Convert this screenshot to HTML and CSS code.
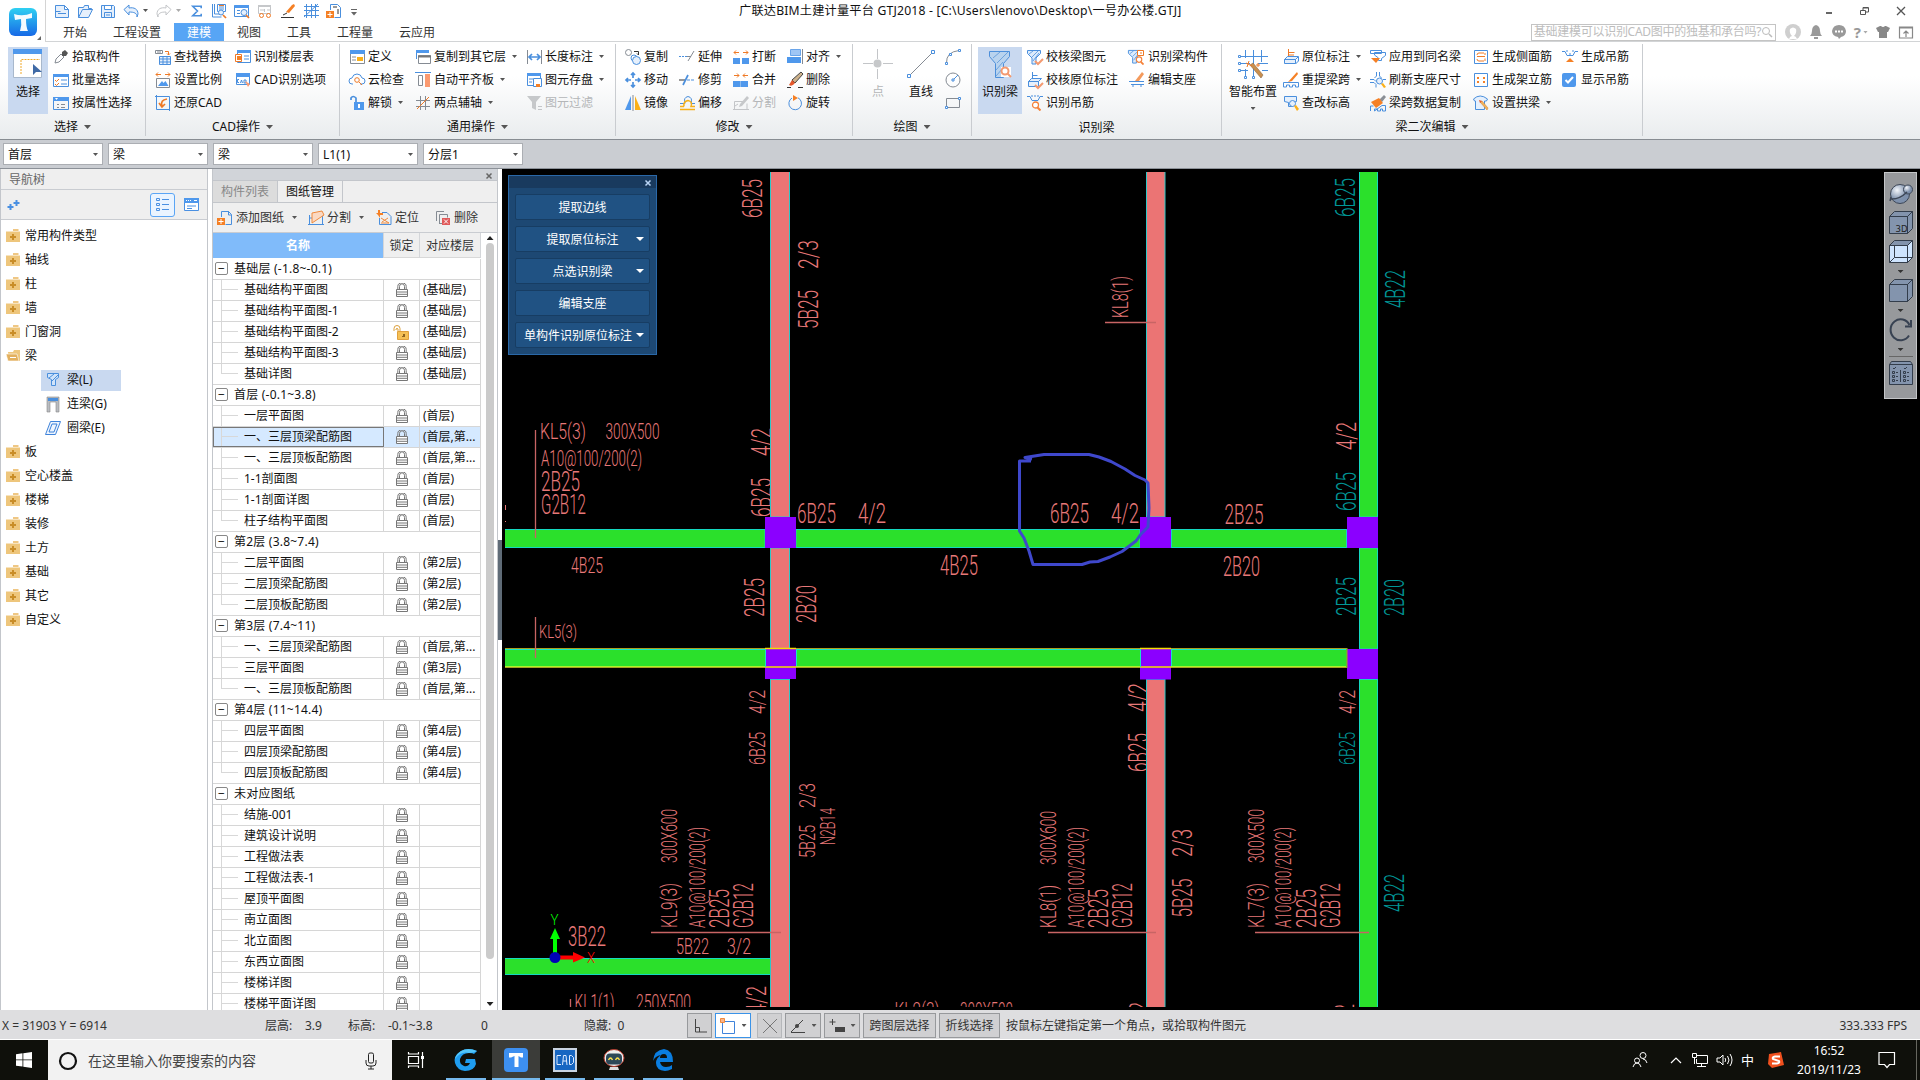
FILE: index.html
```html
<!DOCTYPE html>
<html lang="zh-CN">
<head>
<meta charset="utf-8">
<title>广联达BIM土建计量平台 GTJ2018</title>
<link rel="stylesheet" href="styles.css">
</head>
<body>
<svg class="defs" width="0" height="0">
  <symbol id="lock" viewBox="0 0 12 14"><path d="M3.500 6V3.500a2.500 2.700 0 0 1 5 0V6M1.800 6V3.500a4.200 3.600 0 0 1 8.400 0V6" fill="none" stroke="#777" stroke-width="1"/><path d="M.5 6.500h11v7H.5zM.5 9h11M.5 11.300h11" fill="#fff" stroke="#777"/></symbol>
  <symbol id="unlock" viewBox="0 0 16 15"><path d="M1 6V3.500a3 3 0 0 1 6 0V6M3 5V4a1.300 1.300 0 0 1 2 0v2" fill="none" stroke="#dca03c"/><path d="M4.500 6.500h11v8h-11z" fill="#f5c055" stroke="#e0a03c"/><path d="M10 9h2v3h-3v-1h1z" fill="#8f6420"/></symbol>
  <symbol id="fold" viewBox="0 0 14 13"><path d="M7 1h5.500" stroke="#efc784" stroke-width="2"/><path d="M0 2.500h14V13H0z" fill="#eec67c"/><path d="M7 5v6M4 8h6" stroke="#c98d28" stroke-width="2"/></symbol>
  <symbol id="funnel" viewBox="0 0 16 16"><path d="M1.500 1.500h13v3L10 9v6H6V9L1.500 4.500z" fill="#dcebfb" stroke="#4a8fdd"/><path d="M3 5l4-3M6 8l6-6M7 12l6-8" stroke="#4a8fdd" stroke-width=".8"/></symbol>
  <symbol id="glass" viewBox="0 0 10 10"><circle cx="4.500" cy="4" r="3" fill="#fff" stroke="#f5823a" stroke-width="1.300"/><path d="M6.500 6.500L9.500 9.500" stroke="#f5823a" stroke-width="2"/></symbol>
</svg>

<header class="head">
  <div class="logo">
    <svg width="30" height="31" viewBox="0 0 30 31"><defs><linearGradient id="lg" x1="0" y1="0" x2="0" y2="1"><stop offset="0" stop-color="#2fd0f2"/><stop offset="1" stop-color="#1769e6"/></linearGradient></defs><rect x="1" y="1" width="28" height="28" rx="6" fill="url(#lg)"/><path d="M6 7q9 3 18-1v5l-6 1q0 8 2 12h-8q2-6 1-12l-6 1z" fill="#fff" opacity=".95"/></svg>
    <i class="corner"></i>
  </div>
  <div class="headmain">
    <div class="titlerow">
      <div class="quick">
        <svg class="i" viewBox="0 0 16 16"><path class="b lf" d="M1.500 2.500h9l4 4v8h-13zM10.500 2.500v4h4M4 10.500h8M1.500 8.500h5"/></svg>
        <svg class="i" viewBox="0 0 16 16"><path class="b lf" d="M1.500 14.500v-10h5l1-2h4v3h3l1 1-4 8z M1.500 14.500l4-8h10"/></svg>
        <svg class="i" viewBox="0 0 16 16"><path class="b lf" d="M1.500 2.500h12l1 1v11h-13zM4.500 2.500v4h7v-4M4.500 14.500v-5h7v5M6 12h4"/></svg>
        <svg class="i" viewBox="0 0 16 16"><path class="b lf" d="M1 6.500l5-4.500v3c5-1 9 1 9 6l-1 3c0-4-3-5-8-5v3z"/></svg><i class="ar"></i>
        <svg class="i" viewBox="0 0 16 16"><path class="g2" d="M15 6.500l-5-4.500v3c-5-1-9 1-9 6l1 3c0-4 3-5 8-5v3z"/></svg><i class="ar dim"></i>
        <svg class="i sg" viewBox="0 0 16 16"><path class="b w2" d="M13 5V3H4l5 5-5 5h9v-2"/></svg>
        <svg class="i" viewBox="0 0 16 16"><path class="b" d="M1.500 1v13h9M3.500 1v10h6"/><path class="b" d="M6.500 1.500h8v7h-8zM8 4h5M8 6h5"/><path class="o" d="M8 2.500h5"/><circle class="b lf" cx="10" cy="9.500" r="2.500"/><path class="o w2" d="M12 12l3 3"/></svg>
        <svg class="i" viewBox="0 0 16 16"><path class="b" d="M.5 2.500h14v11H.5z"/><path class="fb" d="M.5 2h14.500v3H.5z"/><path class="b" d="M3 7.500h3M3 10.500h3"/><circle class="b lf" cx="10" cy="9.500" r="3"/><path class="o w2" d="M12 12l3 3"/></svg>
        <svg class="i" viewBox="0 0 16 16"><path class="g2" d="M1.500 2.500h12v8h-12zM3 7h4M7.500 6v3M10 7h3"/><path class="fg2" d="M1 2h13v2H1z"/><circle class="o" cx="4.500" cy="12.500" r="2"/><circle class="o" cx="11.500" cy="12.500" r="2"/></svg>
        <svg class="i" viewBox="0 0 16 16"><path class="fo" d="M14 1l1 2-6 7-3-1 6-7z"/><path class="k" d="M1 14.500h13M3 12l4-2"/></svg>
        <svg class="i" viewBox="0 0 16 16"><path class="b" d="M3.500 1v14M8.500 1v14M12.500 1v14M1 3.500h15M1 7.500h15M1 12.500h15M1 14L15 1"/></svg>
        <svg class="i" viewBox="0 0 16 16"><path class="b" d="M4.500 7V1.500h7l3 3v10h-6"/><path class="k" d="M7 4h4M12 6v5"/><path class="fo" d="M0 8h8v7H0z"/><path d="M1.500 11.500h5M4 9v5" stroke="#fff"/></svg>
        <svg class="more" width="6" height="8"><path d="M0 .500h6" stroke="#666"/><path d="M0 3h6L3 6.500z" fill="#666"/></svg>
      </div>
      <div class="apptitle">广联达BIM土建计量平台 GTJ2018 - [C:\Users\lenovo\Desktop\一号办公楼.GTJ]</div>
      <div class="winbtns">
        <svg width="10" height="12"><path d="M2 8h6" stroke="#666" stroke-width="2"/></svg>
        <svg width="10" height="12"><path d="M.5 5.500h5v4h-5zM3 5V2.500h5.500V7H6M3 3h5" fill="none" stroke="#555"/></svg>
        <svg width="10" height="12"><path d="M1 2l8 8M9 2l-8 8" stroke="#555" stroke-width="1.300"/></svg>
      </div>
    </div>
    <nav class="tabs">
      <span>开始</span><span>工程设置</span><span class="on">建模</span><span>视图</span><span>工具</span><span>工程量</span><span>云应用</span>
      <div class="helpbar">
        <div class="search"><span>基础建模可以识别CAD图中的独基和承台吗?</span><svg width="12" height="12"><circle cx="5" cy="5" r="3.500" fill="none" stroke="#bbb"/><path d="M8 8l3 3" stroke="#bbb" stroke-width="1.500"/></svg></div>
        <svg class="h1" width="16" height="16"><circle cx="8" cy="8" r="8" fill="#cfcfcf"/><path d="M4 15q1-3 3-3-3-3-2-7 3-3 6 0 1 4-2 7 2 0 3 3z" fill="#fff"/></svg>
        <svg class="h2" width="14" height="16"><path d="M7 1q4 1 4 6 0 3 2 5H1q2-2 2-5 0-5 4-6M5 13h4v2H5z" fill="#999"/></svg>
        <svg class="h3" width="16" height="16"><path d="M8 1q6 0 7 6 0 5-5 6l-2 2-1-2Q1 12 1 7q1-6 7-6" fill="#999"/><path d="M4 7.500h2M7 7.500h2M10 7.500h2" stroke="#fff" stroke-width="2"/></svg>
        <b class="qm">?</b><i class="ar dim"></i>
        <svg class="h4" width="14" height="14"><path d="M0 3l4-2h6l4 2-2 4h-1v6H3V7H2z" fill="#888"/><path d="M5 1q2 2 4 0" fill="#fff"/></svg>
        <svg class="h5" width="14" height="13"><path d="M.5 1h13v11H.5zM0 2h14M7 11V5M4.500 7.500L7 5l2.500 2.500" fill="none" stroke="#888" stroke-width="1.200"/></svg>
      </div>
    </nav>
  </div>
</header>

<section class="ribbon">
  <div class="grp g1">
    <div class="body">
      <div class="big sel"><svg width="30" height="30"><path d="M.5.500h28v28H.5z" fill="#fff" stroke="#a8b8cc"/><path class="fb" d="M0 0h29v5H0z"/><path d="M8 25V10.500h19" fill="none" stroke="#f0a828" stroke-dasharray="2 1"/><path d="M20 15v11l3-3h6z" fill="#3f6aa6"/></svg><span>选择</span></div>
      <div class="cols">
        <a><svg class="i" viewBox="0 0 16 16"><path class="g" d="M2 14l1-4 5-5 3 3-5 5z"/><path d="M9 3l3-2 3 3-2 3-4 0z" fill="#555"/></svg>拾取构件</a>
        <a><svg class="i" viewBox="0 0 16 16"><path class="b" d="M.5 2.500h15v12H.5zM8 8h6M8 12h6"/><path class="fb" d="M0 2h16v3H0z"/><path class="o" d="M2 8l1.500 1.500L6 7M2 12l1.500 1.500L6 11"/></svg>批量选择</a>
        <a><svg class="i" viewBox="0 0 16 16"><path class="b" d="M.5 2.500h15v12H.5z"/><path class="fb" d="M0 2h16v4H0z"/><path class="g" d="M4 9.500h2M8 9.500h4M4 12.500h2M8 12.500h4"/><path d="M2 3h3L3.500 5z" fill="#fff"/></svg>按属性选择</a>
      </div>
    </div>
    <div class="cap">选择<i class="ar lg"></i></div>
  </div>
  <div class="grp g2x">
    <div class="body"><div class="cols">
      <a><svg class="i" viewBox="0 0 16 16"><path class="g" d="M.5 1.500h7v3h-7zM3 1v3M5 1v3"/><path class="o" d="M10 2.500h3.500V6M12 4.500l1.500 1.500L15 4.500"/><path class="b lf" d="M4.500 7.500h11v8h-11zM4 10h12M8 7v8M12 7v8M4 13h12"/></svg>查找替换</a>
      <a><svg class="i" viewBox="0 0 16 16"><path class="o" d="M1 2.500h5M3 .5L1 2.500l2 2M10 2.500h5M13 .5l2 2-2 2"/><path class="g" d="M1.500 6.500h13v9h-13z"/><path class="fb" d="M3 14l4-5 1.500 2 2-2 3 5z"/></svg>设置比例</a>
      <a><svg class="i" viewBox="0 0 16 16"><path class="b" d="M1.500 1.500h13v13h-13zM0 1.500h2M1.500 0v2M14.500 14v2"/><path class="o w2" d="M12 4q-7 1-5 7M4 8l3 4 3-3"/></svg>还原CAD</a>
      <a><svg class="i" viewBox="0 0 16 16"><path class="b" d="M2.500 1.500h13v12h-13zM9 7h5M9 10h5"/><path class="fb" d="M2 1h14v3H2z"/><path class="o wf" d="M.5 5.500h6v7h-6z"/><path class="fo" d="M2 7h4v4H2z"/></svg>识别楼层表</a>
      <a><svg class="i" viewBox="0 0 16 16"><path class="b" d="M1.500 1.500h13v11h-13zM4 7.500H2.500v3H4M5.500 11l1-3 1 3M9 8v3h2V8z"/><path class="fb" d="M1 1h14v4H1z"/><path class="fs" d="M10 9l5 3-2 3z"/></svg>CAD识别选项</a>
    </div></div>
    <div class="cap">CAD操作<i class="ar lg"></i></div>
  </div>
  <div class="grp g3">
    <div class="body"><div class="cols">
      <a><svg class="i" viewBox="0 0 16 16"><path class="g" d="M1.500 1.500h14v13h-14zM3 8h4M3 11h4"/><path class="fb" d="M1 1h15v4H1z"/><path class="fy" d="M8 8h6v4H8z"/></svg>定义</a>
      <a><svg class="i" viewBox="0 0 16 16"><path class="b" d="M4 12H3a3 3 0 0 1 0-6q1-4 5-4t5 4a3 3 0 0 1 0 6h-2"/><circle class="o" cx="8" cy="8" r="2.300"/><path class="o" d="M10 10l3 3"/></svg>云检查</a>
      <a><svg class="i" viewBox="0 0 16 16"><path class="b w2" d="M2 5V3q2-3 5 0v4"/><path class="fb" d="M5 7h10v8H5z"/><path d="M10 9v4" stroke="#fff" stroke-width="2"/></svg>解锁<i class="ar"></i></a>
      <a><svg class="i" viewBox="0 0 16 16"><path class="b" d="M1.500 10V1.500h12V4"/><path class="fb" d="M1 1h13v3H1z"/><path class="g wf" d="M3.500 6.500h12v8h-12z"/><path d="M3 7.500h13" stroke="#777" stroke-width="2"/></svg>复制到其它层<i class="ar"></i></a>
      <a><svg class="i" viewBox="0 0 16 16"><path class="b" d="M0 .500h16"/><path class="g" d="M3.500 3.500h4v10h-4z"/><path class="fs" d="M10 2h5v13h-5z"/></svg>自动平齐板<i class="ar"></i></a>
      <a><svg class="i" viewBox="0 0 16 16"><path class="g" d="M1 5.500h14M1 11.500h14M5.500 1v14M10.500 1v14"/><path class="o" d="M2 14L14 2"/></svg>两点辅轴<i class="ar"></i></a>
      <a><svg class="i" viewBox="0 0 16 16"><path class="g" d="M1.500 1v14M15.500 1v14"/><path class="b w2" d="M3 8h11M6 5L3 8l3 3M11 5l3 3-3 3"/></svg>长度标注<i class="ar"></i></a>
      <a><svg class="i" viewBox="0 0 16 16"><path class="b" d="M1.500 1.500h13v12h-13zM3 7h4M3 10h3"/><path class="fb" d="M1 1h14v3H1z"/><path class="b wf" d="M7.500 6.500h8v8h-8z"/><path class="fo" d="M10 12h4v3h-4z"/></svg>图元存盘<i class="ar"></i></a>
      <a class="off"><svg class="i" viewBox="0 0 16 16"><path class="fg2" d="M1 1h14L10 7v8l-4-2V7z"/><path class="g2" d="M12 11.500h4M12 14.500h4"/></svg>图元过滤</a>
    </div></div>
    <div class="cap">通用操作<i class="ar lg"></i></div>
  </div>
  <div class="grp g4">
    <div class="body"><div class="cols">
      <a><svg class="i" viewBox="0 0 16 16"><circle class="g" cx="3.500" cy="3.500" r="3"/><circle class="b" cx="9" cy="9" r="3"/><circle class="b lf" cx="11.500" cy="11.500" r="4"/><path class="k" d="M9 2.500h4.500V6M12 4.500L13.500 6"/></svg>复制</a>
      <a><svg class="i" viewBox="0 0 16 16"><path class="b w2" d="M8 1v5M8 10v5M1 8h5M10 8h5M6 3l2-2 2 2M6 13l2 2 2-2M3 6L1 8l2 2M13 6l2 2-2 2"/></svg>移动</a>
      <a><svg class="i" viewBox="0 0 16 16"><path class="fb" d="M6 1v14H0z"/><path class="g" d="M8 0v16"/><path class="fy" d="M10 1l6 14h-6z"/></svg>镜像</a>
      <a><svg class="i" viewBox="0 0 16 16"><path class="b" stroke-dasharray="2 1" d="M0 7.500h9"/><path class="g" d="M9 12l6-10M8 7.500h4"/></svg>延伸</a>
      <a><svg class="i" viewBox="0 0 16 16"><path class="k" d="M0 8h6"/><path class="b w2" d="M4 13L9 3"/><path class="b" stroke-dasharray="3 1" d="M8 8h8"/></svg>修剪</a>
      <a><svg class="i" viewBox="0 0 16 16"><path class="b" d="M1 8.500h5q-2-6 3-7 5 1 3 7h4"/><path class="yl" d="M1 11.500h4M1 14.500h15M5 11.500q-1-5 4-6 5 1 3 6h4"/></svg>偏移</a>
      <a><svg class="i" viewBox="0 0 16 16"><path class="o" d="M1 3.500h5M3 1.500l-2 2 2 2M10 3.500h5M13 1.500l2 2-2 2"/><path class="fb" d="M0 9h7v6H0zM9 9h7v6H9z"/></svg>打断</a>
      <a><svg class="i" viewBox="0 0 16 16"><path class="o" d="M1 3.500h5M4 1.500l2 2-2 2M10 3.500h5M12 1.500l-2 2 2 2"/><path class="fb" d="M0 9h15v6H0z"/><path d="M7.500 9v6" stroke="#8bbcf0"/></svg>合并</a>
      <a class="off"><svg class="i" viewBox="0 0 16 16"><path class="g2" d="M1.500 14.500v-8h9M5 14.500h9v-6M0 14.500h16M2 11l3-2"/><path class="fg2" d="M14 1l2 2-7 8-3 1 1-3z"/></svg>分割</a>
      <a><svg class="i" viewBox="0 0 16 16"><path d="M3.500.500h10v6h-10z" fill="#9fc6f5" stroke="#6aa5ea"/><path class="fb" d="M0 8h14v6H0z"/><path class="g" d="M15.500 0v15"/></svg>对齐<i class="ar"></i></a>
      <a><svg class="i" viewBox="0 0 16 16"><path d="M14 0l2 2-8 9-3-3z" fill="#cdb28c" stroke="#444"/><path d="M5 8l3 3q-3 4-6 2z" fill="#e4572a"/><path class="k" d="M0 15.500h4M11 15.500h5"/></svg>删除</a>
      <a><svg class="i" viewBox="0 0 16 16"><path class="b" d="M5 3a6.300 6.300 0 1 0 6-.2"/><path class="fo" d="M6 0l5 3-5 3z"/></svg>旋转</a>
    </div></div>
    <div class="cap">修改<i class="ar lg"></i></div>
  </div>
  <div class="grp g5">
    <div class="body">
      <div class="big off"><svg width="30" height="30"><path class="g2" d="M0 14.500h10M20 14.500h10M14.500 0v10M14.500 20v10"/><circle class="fg2" cx="14.500" cy="14.500" r="4"/></svg><span>点</span></div>
      <div class="big"><svg width="30" height="30"><path class="g" d="M4 26L26 4"/><path class="b wf" d="M1.500 25.500h3v3h-3zM25.500 1.500h3v3h-3z"/></svg><span>直线</span></div>
      <div class="cols">
        <a><svg class="i" viewBox="0 0 16 16"><path class="g" d="M1.500 14Q1 3 14 1.500"/><path class="b wf" d="M.5 13.500h2v2h-2zM4.500 4.500h2v2h-2zM13.500.500h2v2h-2z"/></svg></a>
        <a><svg class="i" viewBox="0 0 16 16"><circle class="g" cx="8" cy="8" r="7"/><path class="b" d="M7 7h2v2H7zM9 7l4-4"/></svg></a>
        <a><svg class="i" viewBox="0 0 16 16"><path class="g" d="M1.500 3.500h13v9h-13z"/><path class="b wf" d="M.5 11.500h2v2h-2zM13.500 2.500h2v2h-2z"/></svg></a>
      </div>
    </div>
    <div class="cap">绘图<i class="ar lg"></i></div>
  </div>
  <div class="grp g6">
    <div class="body">
      <div class="big sel"><svg width="30" height="30"><path d="M4.500 2.500h20v5l-6 7v14h-8v-14l-6-7z" fill="#b9d3ee" stroke="#4d8fda"/><path d="M8 9l7-6M12 14L23 3M11 21l7-8M11 27l7-8" stroke="#6ea3de"/><path d="M16 18h10v10H16z" fill="#fff"/><circle class="os" cx="20" cy="22" r="3.500"/><path class="os" d="M22.500 24.500l3.500 3.500"/></svg><span>识别梁</span></div>
      <div class="cols">
        <a><svg class="i" viewBox="0 0 16 16"><use href="#funnel" x="-1" width="16" height="16"/><path class="os" d="M8 12l3 3 5-5"/></svg>校核梁图元</a>
        <a><svg class="i" viewBox="0 0 16 16"><path class="b lf" d="M1.500 9.500l3-3h10l-3 3zM1.500 9.500h10v5h-10zM5.500 6V0M5.500 3.500h5"/><path class="os" d="M8 13l3 3 5-5"/></svg>校核原位标注</a>
        <a><svg class="i" viewBox="0 0 16 16"><path class="b" d="M0 1.500h3l2 4h6l2-4h3M5 0v2M8 0v2M11 0v2"/><use href="#glass" x="4" y="6" width="10" height="10"/></svg>识别吊筋</a>
        <a><svg class="i" viewBox="0 0 16 16"><use href="#funnel" x="-2" width="15" height="15"/><path class="o wf" d="M8.500 1.500h6v5h-6zM11 4h2"/><use href="#glass" x="6" y="7" width="9" height="9"/></svg>识别梁构件</a>
        <a><svg class="i" viewBox="0 0 16 16"><path class="b" d="M0 9.500h15M2 12.500h13M4 13v2M12 13v2"/><path d="M13 0l2 2-5 7H6z" fill="#f49a5c"/></svg>编辑支座</a>
      </div>
    </div>
    <div class="cap low">识别梁</div>
  </div>
  <div class="grp g7">
    <div class="body">
      <div class="big"><svg width="30" height="30"><path class="b" d="M2 7.500h28M2 14.500h10M20 14.500h10M2 21.500h8M24 21.500h6M7.500 1v8M15.500 1v27M23.500 1v12M7.500 20v8"/><path class="b wf" d="M.5 6.500h2v2h-2zM.5 13.500h2v2h-2zM.5 20.500h2v2h-2zM6.500 27.500h2v2h-2zM14.500 27.500h2v2h-2z"/><path d="M12 16l3-2 10 12-2 3z" fill="#c98f4e" stroke="#8a6a4a" stroke-width=".6"/><path class="o" d="M11 12l-2 6M8 14l6 3M20 14v4M18 16h4"/></svg><span>智能布置</span><i class="ar"></i></div>
      <div class="cols">
        <a><svg class="i" viewBox="0 0 16 16"><path class="b lf" d="M1.500 10.500l3-3h11l-3 3zM1.500 10.500h11v4h-11zM15.500 8v4l-3 3"/><path class="o" d="M5.500 7V0M5.500 3.500h6M5 6h6"/></svg>原位标注<i class="ar"></i></a>
        <a><svg class="i" viewBox="0 0 16 16"><path class="fo" d="M14 0l1 2-6 7-4 1z"/><path class="b" d="M.5 15v-4.500h15V15h-3v-2H9.500v2h-3v-2H3.500v2z"/></svg>重提梁跨<i class="ar"></i></a>
        <a><svg class="i" viewBox="0 0 16 16"><path class="b lf" d="M1.500 1.500h12v5l-4 1v4h-4v-4l-4-1z"/><circle class="b lf" cx="9.500" cy="8.500" r="3"/><path class="fy" d="M11 11l2-1 3 4-2 2z"/></svg>查改标高</a>
        <a><svg class="i" viewBox="0 0 16 16"><path class="b" d="M.5 1.500h11v3h-11zM4.500 3.500h11v3l-4 3v2h-3V9l-4-3z"/><path class="fo" d="M1 9h9l-4 5z"/></svg>应用到同名梁</a>
        <a><svg class="i" viewBox="0 0 16 16"><path class="b" d="M6.500 0v4l-2 2M9.500 0v4l2 2M0 7.500h4l2 2M0 10.500h4l2 2v3M16 7.500h-3"/><circle class="b lf" cx="9.500" cy="9" r="3"/><path class="fy" d="M11 12l2-1 3 4-2 1z"/></svg>刷新支座尺寸</a>
        <a><svg class="i" viewBox="0 0 16 16"><path d="M9 5l5-5 2 2-4 5z" fill="#8a8f96"/><path class="fo" d="M1 7l8-4 4 5-7 5z"/><path class="b" d="M.5 16v-5h3M12 10.500h3.500V16h-3v-2h-2v2h-3v-2h-3v2z"/></svg>梁跨数据复制</a>
        <a><svg class="i" viewBox="0 0 16 16"><path class="b" d="M1.500 1.500h13v13h-13z"/><path class="o" d="M4 6q0-2 2-2h5M12 6V4M4 7.500h8M4 10q0 2 2 2h5M12 9.500V12"/></svg>生成侧面筋</a>
        <a><svg class="i" viewBox="0 0 16 16"><path class="b" d="M1.500 1.500h13v13h-13z"/><path class="fo" d="M4 5h2v2H4zM10 5h2v2h-2zM4 9h2v2H4zM10 9h2v2h-2z"/></svg>生成架立筋</a>
        <a><svg class="i" viewBox="0 0 16 16"><path class="b lf" d="M.5 4Q7-2 14.500 4l-1 2h-2v8.500h-9V6h-1z"/><path d="M7 7l2-1 6 7-1 2z" fill="#f5b35a" stroke="#d38a3a" stroke-width=".6"/><path d="M6 5l3 1-2 2z" fill="#e4572a"/></svg>设置拱梁<i class="ar"></i></a>
        <a><svg class="i" viewBox="0 0 16 16"><path class="b" d="M0 2.500h3l2 4h6l2-4h3M5 1v2M8 4v2M11 1v2"/><path class="fo" d="M8 9l4 4H4z"/></svg>生成吊筋</a>
        <a class="chk"><svg class="i" viewBox="0 0 16 16"><rect class="fb" x="0" y="1" width="14" height="14" rx="2"/><path d="M3.500 8l2.500 2.500L11 5" fill="none" stroke="#fff" stroke-width="2"/></svg>显示吊筋</a>
      </div>
    </div>
    <div class="cap">梁二次编辑<i class="ar lg"></i></div>
  </div>
</section>

<section class="combos">
  <div>首层<i class="ar"></i></div><div>梁<i class="ar"></i></div><div>梁<i class="ar"></i></div><div>L1(1)<i class="ar"></i></div><div>分层1<i class="ar"></i></div>
</section>

<main class="main">
  <aside class="nav">
    <div class="navhead">导航树</div>
    <div class="navtools">
      <svg width="14" height="12"><path d="M3.500 5v6M.5 8h6M9.500 1v6M6.500 4h6" stroke="#4a90e2" stroke-width="2"/></svg>
      <span class="vw on"><svg width="14" height="14"><path d="M.5.500h3v2h-3zM.5 5.500h3v2h-3zM.5 10.500h3v2h-3zM6 1.500h7M6 6.500h7M6 11.500h7" fill="none" stroke="#4a90e2"/></svg></span>
      <span class="vw"><svg width="16" height="14"><path d="M.5.500h14v12H.5z" fill="#fff" stroke="#4a90e2"/><path class="fb" d="M0 0h15v5H0z"/><path d="M2 2.500h1M4 2.500h1M6 2.500h1M10 2.500h3" stroke="#fff"/><path d="M3 8h9M3 10.500h5" stroke="#4a90e2"/></svg></span>
    </div>
    <div class="tree">
      <p><svg class="fd"><use href="#fold"/></svg>常用构件类型</p>
      <p><svg class="fd"><use href="#fold"/></svg>轴线</p>
      <p><svg class="fd"><use href="#fold"/></svg>柱</p>
      <p><svg class="fd"><use href="#fold"/></svg>墙</p>
      <p><svg class="fd"><use href="#fold"/></svg>门窗洞</p>
      <p><svg class="fd" viewBox="0 0 14 13"><path d="M2 3h5l1-2h6v11H3z" fill="#eec67c"/><path d="M0 5h11l2 7H2z" fill="#e3b05e" stroke="#fff" stroke-width=".6"/><path d="M4 8.500h6" stroke="#fff"/></svg>梁</p>
      <p class="sub"><span class="hit"><svg class="si" viewBox="0 0 16 16"><path d="M2.500 1.500h11v4l-3 2v6h-4v-6l-4-2z" fill="#cfe3fa" stroke="#4a8fdd"/><path d="M4 6l5-4M7 9l6-6" stroke="#4a8fdd"/></svg>梁(L)</span></p>
      <p class="sub"><svg class="si" viewBox="0 0 16 16"><path d="M2 1h12v15h-3V6H5v10H2z" fill="#b9bcc1" stroke="#888" stroke-width=".6"/><path d="M3 2h10v3H3z" fill="#4a8fdd"/></svg>连梁(G)</p>
      <p class="sub"><svg class="si" viewBox="0 0 16 16"><path d="M5.500 1.500h10l-5 13H.500zM7 4h5L9 12H4z" fill="#eef5fe" stroke="#3f83da"/></svg>圈梁(E)</p>
      <p><svg class="fd"><use href="#fold"/></svg>板</p>
      <p><svg class="fd"><use href="#fold"/></svg>空心楼盖</p>
      <p><svg class="fd"><use href="#fold"/></svg>楼梯</p>
      <p><svg class="fd"><use href="#fold"/></svg>装修</p>
      <p><svg class="fd"><use href="#fold"/></svg>土方</p>
      <p><svg class="fd"><use href="#fold"/></svg>基础</p>
      <p><svg class="fd"><use href="#fold"/></svg>其它</p>
      <p><svg class="fd"><use href="#fold"/></svg>自定义</p>
    </div>
  </aside>

  <aside class="panel">
    <div class="ptop"><svg width="8" height="8"><path d="M1.500 1.500l5 5M6.500 1.500l-5 5" stroke="#666" stroke-width="1.500"/></svg></div>
    <div class="ptabs"><span>构件列表</span><span class="on">图纸管理</span></div>
    <div class="ptools">
      <a><svg class="i" viewBox="0 0 16 16"><path class="b" d="M4.500 7V1.500h7l3 3v10h-6M11.500 1v4h3"/><path class="fo" d="M0 8h8v7H0z"/><path d="M1.500 11.500h5M4 9v5" stroke="#fff"/></svg>添加图纸<i class="ar"></i></a>
      <a class="t2"><svg class="i" viewBox="0 0 16 16"><path class="b" d="M1.500 5v9.500h13V5M1 8h8M0 14.500h16"/><path d="M4 3l10-2 2 4-12 8z" fill="#fbd9c2" stroke="#f08a3c"/></svg>分割<i class="ar"></i></a>
      <a class="t3"><svg class="i" viewBox="0 0 16 16"><path class="b" d="M6 2.500h5l4 4v8H3.500V8"/><path class="fo" d="M0 3h2V0h2v3h3v2H4v3L2 5z"/><path d="M5 8l8 5M6 12l6-4M5 13h8" stroke="#f08a3c"/></svg>定位</a>
      <a class="t4"><svg class="i" viewBox="0 0 16 16"><path class="g" d="M1.500 11V1.500H9M4.500 14V4.500h8v3M4.500 13.500h3"/><path d="M7 8h8v7H7z" fill="#e05a5a"/><path d="M9 9.500l4 4M13 9.500l-4 4" stroke="#fff"/></svg>删除</a>
    </div>
    <div class="tbl">
      <div class="rows" id="sheets">
        <div class="hd"><span>名称</span><span>锁定</span><span>对应楼层</span></div>
      </div>
      <div class="scroll"><i class="ar lg up"></i><div class="thumb"></div><i class="ar lg"></i></div>
    </div>
  </aside>
  <div class="split"><div class="grip"></div></div>

  <section class="view">
    <svg class="cad" width="1418" height="841" viewBox="502 169 1418 841">
      <defs><clipPath id="clip"><rect x="505" y="172" width="1415" height="835"/></clipPath></defs>
      <g clip-path="url(#clip)">
        <g id="under" class="t"></g>
        <!-- beams -->
        <g class="green">
          <rect x="500" y="529.500" width="265" height="18"/><rect x="796" y="529.500" width="344" height="18"/><rect x="1171.500" y="529.500" width="175" height="18"/>
          <rect x="500" y="958.500" width="271" height="16"/>
          <rect x="1359.500" y="160" width="18" height="357"/><rect x="1359.500" y="548" width="18" height="101"/><rect x="1359.500" y="679.500" width="18" height="340"/>
        </g>
        <g class="pinkb">
          <rect x="770.500" y="160" width="19" height="357"/><rect x="770.500" y="548" width="19" height="101"/><rect x="770.500" y="679.500" width="19" height="340"/>
          <rect x="1146.500" y="160" width="18.500" height="357"/><rect x="1146.500" y="679.500" width="18.500" height="340"/>
        </g>
        <path class="purple" d="M765 517h31v31h-31zM765 648h31v31h-31zM1140 517h31v31h-31zM1140 648h31v31.500h-31zM1347 517h31v31h-31zM1347 649h31v30h-31z"/>
        <path d="M500 648h265v20H500zM796 648h344v20H796zM1171 648h176v20h-176z" fill="#2be02b"/>
        <path d="M500 648.500h265M796 648.500h344M1171 648.500h175M500 667.500h265M796 667.500h344M1171 667.500h175M1347 648v20" fill="none" stroke="#a8a020"/>
        <path d="M765 648.500h31M765 667h31M1140 648.500h31M1140 667h31" stroke="#f6e000" stroke-width="1.500"/>
        <path d="M500 649.500h265M796 649.500h344M1171 649.500h175M765.500 649v18M796.500 649v18M1140.500 649v18M1171.500 649v18" stroke="#19e6c8"/>
        <path d="M500 666.500h265M796 666.500h344M1171 666.500h175" stroke="#a8f52a"/>
        <!-- leader lines -->
        <path d="M535.500 430v108M535.500 617v41M1105 322.500h51M651 932.500h130M1048 932.500h108M1255 932.500h114M570.500 999v10" fill="none" stroke="#c86464" stroke-width="1.300"/>
        <path d="M505.500 505v5M505.500 521v1" stroke="#e87878"/>
        <g id="notes" class="t"></g>
        <!-- coordinate axes -->
        <path d="M555 957v-22" stroke="#0f0" stroke-width="4"/><path d="M555 928l5 11h-10z" fill="#0f0"/>
        <path d="M555 957.500h20" stroke="#f00" stroke-width="4"/><path d="M573 952l12 5.500-12 5z" fill="#f00"/>
        <circle cx="555" cy="957.500" r="5.500" fill="#0000b8"/>
        <path d="M1031 461H1019.500V531L1024 538 1029 551 1033 564.500H1082L1090 562 1098 561.500 1110 557 1122 551.500 1136 541 1141 534 1148 527 1149 508 1148 483 1145 480 1135 475.500 1125 469 1111 461.500 1099 457 1089 454.500H1044L1025 457.500 1032 459" fill="none" stroke="#3f48cc" stroke-width="3" stroke-linejoin="round"/>
      </g>
    </svg>

    <div class="float">
      <div class="fhead"><svg width="8" height="8"><path d="M1.500 1.500l5 5M6.500 1.500l-5 5" stroke="#b9d4f5" stroke-width="1.500"/></svg></div>
      <div class="fbody">
        <button>提取边线</button>
        <button>提取原位标注<i class="ar"></i></button>
        <button>点选识别梁<i class="ar"></i></button>
        <button>编辑支座</button>
        <button class="wide">单构件识别原位标注<i class="ar"></i></button>
      </div>
    </div>

    <div class="vtools">
      <svg width="26" height="24" viewBox="0 0 26 24"><defs><radialGradient id="pl" cx=".35" cy=".3"><stop offset="0" stop-color="#f3f6fb"/><stop offset="1" stop-color="#7d90ac"/></radialGradient></defs><circle cx="12" cy="12" r="9.500" fill="url(#pl)" stroke="#3d4757"/><circle cx="20" cy="7.500" r="4.500" fill="url(#pl)" stroke="#3d4757"/><path d="M2 17q9 1 17-7M2 19l1-4" fill="none" stroke="#3d4757" stroke-width="1.500"/></svg>
      <svg class="c1" width="24" height="24" viewBox="0 0 24 24"><path class="cube" d="M.5 5.500h18v17H.5zM.5 5.500l5-5h18l-5 5M23.500.500v17l-5 5V5.500z"/><text x="6.500" y="20.500" class="d3">3D</text></svg>
      <svg class="c2" width="24" height="24" viewBox="0 0 24 24"><path d="M.5 5.500h18v17H.5zM18.500 5.500l5-5v17l-5 5z" fill="#cfe5ff" stroke="#333d4b"/><path d="M.5 5.500l5-5h18l-5 5z" fill="#8394ad" stroke="#333d4b"/><path d="M5.500 6v11.500h13M.5 22.500l5-5M18.500 17.500h5" fill="none" stroke="#333d4b"/></svg>
      <i class="ar lg"></i>
      <svg class="c3" width="24" height="24" viewBox="0 0 24 24"><path class="cube" d="M.5 5.500h18v17H.5zM.5 5.500l5-5h18l-5 5M23.500.500v17l-5 5V5.500z"/></svg>
      <i class="ar lg"></i>
      <svg class="c4" width="24" height="24" viewBox="0 0 24 24"><path d="M20 17.500A10 10.500 0 1 1 20.500 7M22 2v6.500h-6" fill="none" stroke="#384252" stroke-width="2"/></svg>
      <i class="ar lg"></i>
      <hr>
      <svg width="24" height="24" viewBox="0 0 24 24"><path d="M.5 3.500l2-3h19l2 3v20H.5z" fill="#8394ad" stroke="#333d4b"/><path d="M.5 3.500h23M4 7l1 1 2-2M15 7l1 1 2-2M11.500 9v12M3.500 10.500h2v2h-2zM3.500 14.500h2v2h-2zM3.500 18.500h2v2h-2zM14.500 10.500h2v2h-2zM14.500 14.500h2v2h-2zM14.500 18.500h2v2h-2zM7 11.500h2M7 15.500h2M7 19.500h2M18 11.500h2M18 15.500h2M18 19.500h2" fill="none" stroke="#333d4b"/></svg>
    </div>
  </section>
</main>

<footer class="status">
  <span class="s1">X = 31903 Y = 6914</span><span class="s2">层高:</span><span class="s3">3.9</span><span class="s4">标高:</span><span class="s5">-0.1~3.8</span><span class="s6">0</span><span class="s7">隐藏:&nbsp; 0</span>
  <div class="sb"><svg width="16" height="16"><path d="M3.500 1v13H15M3.500 9.500h4V14" fill="none" stroke="#444"/></svg></div>
  <div class="sb act wd"><svg width="16" height="16"><path d="M2.500 3.500h12v12h-12z" fill="#fff" stroke="#3f83da"/><path d="M.5.500h4v4h-4z" fill="#fbb48a" stroke="#f08a3c"/></svg><i class="ar"></i></div>
  <div class="sb dis"><svg width="16" height="16"><path d="M1 1l14 14M15 1L1 15" stroke="#777"/></svg></div>
  <div class="sb wd"><svg width="16" height="16"><path d="M1 14.500h14M1 14L13 2" stroke="#444"/><circle cx="7" cy="8" r="2" fill="#444"/></svg><i class="ar"></i></div>
  <div class="sb wd"><svg width="16" height="16"><path d="M3.500 1v6M.5 4h6" stroke="#444"/><path d="M6 9h10v5H6z" fill="#444"/></svg><i class="ar"></i></div>
  <div class="sb tx1">跨图层选择</div><div class="sb tx2">折线选择</div>
  <span class="tip">按鼠标左键指定第一个角点，或拾取构件图元</span>
  <span class="fps">333.333 FPS</span>
</footer>

<footer class="task">
  <div class="start"><svg width="16" height="16"><path d="M0 2.300l6.500-1v6.200H0zM7.300 1.200L16 0v7.500H7.300zM0 8.300h6.500v6.300L0 13.700zM7.300 8.300H16V16l-8.700-1.200z" fill="#fff"/></svg></div>
  <div class="sbox"><svg width="20" height="20"><circle cx="10" cy="10" r="8" fill="none" stroke="#111" stroke-width="2.200"/></svg><span>在这里输入你要搜索的内容</span><svg class="mic" width="12" height="18"><rect x="3.500" y="1" width="5" height="10" rx="1.500" fill="none" stroke="#222"/><path d="M1 8v3q0 3 3 3h4q3 0 3-3V8M6 14v3M3 17h6" fill="none" stroke="#222"/></svg></div>
  <div class="tb tv"><svg width="18" height="18"><path d="M1.500 5.500h10v7h-10zM1.500 1v2h10V1M1.500 17v-2h10v2M15.500 1v16" fill="none" stroke="#fff" stroke-width="1.200"/><path d="M14 5h3v3h-3z" fill="#fff"/></svg></div>
  <div class="tb run g0"><svg width="26" height="26"><path d="M24 4Q15 0 8 4 0 9 2 16q2 7 10 8 9 0 11-7l-1-5h-9l-1 4h5q-2 4-6 3-5-2-4-7Q9 6 16 6q4 0 5 1z" fill="#1f9df0"/><path d="M24 4q-9-4-16 0Q3 7 2 12q6-8 14-6 5 0 8-2" fill="#52c5fa"/></svg></div>
  <div class="tb run cur"><svg width="24" height="24"><rect width="24" height="24" rx="4" fill="#3d8ff0"/><path d="M5 5h14v4.500h-2L14.500 8v11h-4V8L7 9.500H5z" fill="#fff"/></svg></div>
  <div class="tb run"><svg width="24" height="24"><rect x="1" y="1" width="22" height="22" fill="#1766c2" stroke="#c9d4e2" stroke-width="2"/><path d="M8 7.500H4v9h4M9.500 17l1-9.500h2.500l1 9.500M10 13h4M16.500 7.500v9h2l2-2v-5l-2-2z" fill="none" stroke="#dceaff"/></svg></div>
  <div class="tb run"><svg width="24" height="24"><ellipse cx="12" cy="10" rx="10" ry="8.500" fill="#eee" stroke="#b33b2c"/><rect x="4" y="5.500" width="16" height="11" rx="4" fill="#2c4858"/><path d="M6.500 12q2-4 4 0M13.500 12q2-4 4 0" fill="none" stroke="#ffe34d" stroke-width="1.300"/><path d="M8 19h8l1 3H7z" fill="#ddd"/></svg></div>
  <div class="tb run"><svg width="22" height="24"><path d="M1 13Q2 2 12 1q9 1 9 13H8q1 5 6 5 4 0 6-2v4q-4 2-7 2Q4 22 4 15q0-5 5-8Q3 8 1 13m7-3h7q0-4-3-4-4 0-4 4" fill="#0a7de0" fill-rule="evenodd"/></svg></div>
  <div class="tray">
    <svg class="p1" width="16" height="18"><circle cx="11" cy="4.500" r="3" fill="none" stroke="#fff"/><circle cx="5" cy="9.500" r="2.500" fill="none" stroke="#fff"/><path d="M1 16q1-4 4-4t4 4M11 8q3 0 4 4" fill="none" stroke="#fff"/></svg>
    <svg class="p2" width="12" height="8"><path d="M1 7l5-5 5 5" fill="none" stroke="#fff" stroke-width="1.200"/></svg>
    <svg class="p3" width="17" height="15"><path d="M5 2.500h10.500v8h-11V6M9.500 11v3M5 13.500h9M.5.500h4v4h-4zM2.500 5v6" fill="none" stroke="#fff"/></svg>
    <svg class="p4" width="17" height="14"><path d="M1 5h3l3-3v10L4 9H1zM9 5q1.500 2 0 4M11.500 3q3 4 0 8M14 1q4 6 0 12" fill="none" stroke="#fff"/></svg>
    <span class="ime">中</span>
    <svg class="p5" width="16" height="16"><path d="M1 2l12-2 3 13-12 3-4-4z" fill="#f0501e"/><path d="M12 4.500H7Q4 5 5 7l6 2q1 2-2 2.500H4" fill="none" stroke="#fff" stroke-width="2"/></svg>
    <div class="clock"><span>16:52</span><span>2019/11/23</span></div>
    <svg class="p6" width="18" height="18"><path d="M1 1.500h15.500v12h-5l-2.500 3-2.500-3H1z" fill="none" stroke="#fff" stroke-width="1.200"/></svg>
  </div>
</footer>
<script src="drawing.js"></script>
</body>
</html>
```
FILE: drawing.js
```js
// Sheets of the project, grouped by floor: [group title, floor label, sheet names]
const groups = [
  ['基础层 (-1.8~-0.1)', '(基础层)', ['基础结构平面图', '基础结构平面图-1', '基础结构平面图-2', '基础结构平面图-3', '基础详图']],
  ['首层 (-0.1~3.8)', '(首层)', ['一层平面图', '一、三层顶梁配筋图', '一、三层顶板配筋图', '1-1剖面图', '1-1剖面详图', '柱子结构平面图']],
  ['第2层 (3.8~7.4)', '(第2层)', ['二层平面图', '二层顶梁配筋图', '二层顶板配筋图']],
  ['第3层 (7.4~11)', '(第3层)', ['一、三层顶梁配筋图', '三层平面图', '一、三层顶板配筋图']],
  ['第4层 (11~14.4)', '(第4层)', ['四层平面图', '四层顶梁配筋图', '四层顶板配筋图']],
  ['未对应图纸', '', ['结施-001', '建筑设计说明', '工程做法表', '工程做法表-1', '屋顶平面图', '南立面图', '北立面图', '东西立面图', '楼梯详图', '楼梯平面详图']]
];
let rows = '';
groups.forEach(([title, floor, sheets], g) => {
  rows += `<div class="gr"><i>−</i>${title}</div>`;
  sheets.forEach((name, k) => {
    const open = name === '基础结构平面图-2';
    const last = g < 5 && k === sheets.length - 1 ? ' end' : '';
    const cur = g === 1 && k === 1 ? ' cur' : '';
    const where = name.startsWith('一、') ? '(首层,第...' : floor;
    rows += `<div class="r${last}${cur}"><span class="n">${name}</span><span class="l"><svg${open ? ' class="un"' : ''}><use href="#${open ? 'unlock' : 'lock'}"/></svg></span><span class="f">${where}</span></div>`;
  });
});
document.getElementById('sheets').insertAdjacentHTML('beforeend', rows);

// Reinforcement notes: [text, x, baseline y, length, size class, colour class]
const P = 'pk', T = 'tl';
const flat = [
  ['KL5(3)', 540, 439, 46, 16, P], ['300X500', 605.5, 439, 54, 16, P], ['A10@100/200(2)', 541, 466, 101, 16, P],
  ['2B25', 541, 490.5, 39, 19, P], ['G2B12', 541, 514, 45, 19, P],
  ['4B25', 571, 573, 32, 16, P], ['5B22', 676, 954, 33, 16, P], ['3/2', 727, 954, 24, 16, P],
  ['KL1(1)', 574.5, 1010, 40, 16, P], ['250X500', 636, 1010, 55, 16, P],
  ['KL2(3)', 894.5, 1018, 45, 16, P], ['300X500', 960, 1018, 53, 16, P],
  ['6B25', 797, 523, 39, 19, P], ['4/2', 858, 523, 28, 19, P], ['6B25', 1050, 523, 39, 19, P], ['4/2', 1111, 523, 28, 19, P],
  ['2B25', 1224.5, 524, 39, 19, P], ['2B20', 1223, 575.5, 37, 19, P], ['4B25', 940, 575, 38, 19, P], ['3B22', 568, 945.5, 38, 19, P],
  ['KL5(3)', 539, 638, 38, 13, P], ['Y', 550.5, 925, 8, 10, 'yy'], ['X', 587, 963, 8, 10, 'xx']
];
const upright = [
  ['6B25', 762, 218, 39, 19, P], ['5B25', 818, 329, 39, 19, P], ['2/3', 818, 269, 29, 19, P], ['4/2', 1356, 450, 28, 19, P],
  ['2B25', 764, 617, 39, 19, P], ['2B20', 816, 623, 38, 19, P],
  ['2B25', 729, 928, 39, 19, P], ['G2B12', 753, 928, 45, 19, P], ['2B25', 1108, 928, 39, 19, P], ['G2B12', 1132, 928, 45, 19, P],
  ['5B25', 1192, 917.5, 39, 19, P], ['2/3', 1192, 857, 28, 19, P], ['2B25', 1315.5, 928, 39, 19, P], ['G2B12', 1339.5, 928, 45, 19, P],
  ['4/2', 766, 1014, 28, 19, P], ['4/2', 1149, 1030, 28, 19, P], ['4/2', 1354, 1032, 28, 19, P],
  ['KL8(1)', 1128, 318, 42, 16, P], ['4/2', 764.5, 714, 24, 16, P], ['6B25', 764.5, 765, 33, 16, P], ['4/2', 1354.5, 714, 24, 16, P],
  ['5B25', 814.5, 858, 33, 16, P], ['2/3', 814.5, 808, 25, 16, P], ['N2B14', 835, 845, 37, 15, P],
  ['KL9(3)', 677, 928, 45, 16, P], ['300X600', 677, 863, 54, 16, P], ['A10@100/200(2)', 704.5, 928, 101, 16, P],
  ['KL8(1)', 1056, 928, 43, 16, P], ['300X600', 1056, 865, 54, 16, P], ['A10@100/200(2)', 1084, 928, 101, 16, P],
  ['KL7(3)', 1263.5, 928, 45, 16, P], ['300X500', 1263.5, 863, 54, 16, P], ['A10@100/200(2)', 1291, 928, 101, 16, P],
  ['6B25', 1354.5, 217, 39, 19, T], ['4B22', 1405, 308, 38, 19, T], ['6B25', 1356, 511, 39, 19, T], ['2B25', 1356, 616, 39, 19, T],
  ['2B20', 1404, 616, 37, 19, T], ['4B22', 1404, 912, 38, 19, T], ['6B25', 1354.5, 765, 33, 16, T]
];
// Notes partly covered by a beam
const covered = [['4/2', 771, 456, 28, 19, P], ['6B25', 771, 517, 39, 19, P], ['4/2', 1148, 712, 29, 19, P], ['6B25', 1148, 772, 39, 19, P]];
const draw = (list, turn) => list.map(([s, x, y, len, size, c]) =>
  `<text class="t${size} ${c}" transform="translate(${x} ${y})${turn ? ' rotate(-90)' : ''}" textLength="${len}" lengthAdjust="spacingAndGlyphs">${s}</text>`).join('');
document.getElementById('under').innerHTML = draw(covered, true);
document.getElementById('notes').innerHTML = draw(flat, false) + draw(upright, true);
```
FILE: styles.css
```css
* { box-sizing: border-box; }
body { margin: 0; width: 1920px; height: 1080px; overflow: hidden; display: flex; flex-direction: column; background: #fff; color: #111; font: 12px/16px "Noto Sans", "Noto Sans CJK SC", sans-serif; }
svg { display: block; flex: none; overflow: visible; }
p { margin: 0; }
.defs { position: absolute; }
.i { width: 16px; height: 16px; }

/* icon palette */
.b, .o, .g, .g2, .k, .yl, .os { fill: none; stroke-width: 1; }
.b { stroke: #4a8fdd; } .o { stroke: #ef7a26; } .g { stroke: #858b93; } .g2 { stroke: #c3c5c8; } .k { stroke: #333; }
.yl { stroke: #f5b018; stroke-width: 1.5; } .os { stroke: #f49a70; stroke-width: 2; }
.w2 { stroke-width: 1.7; } .lf { fill: #e6f0fc; } .wf { fill: #fff; }
.fb { fill: #4f98ec; } .fo { fill: #f58025; } .fy { fill: #fbb018; } .fs { fill: #fb9a70; } .fg2 { fill: #c6c8ca; }

/* drop-down arrows */
.ar { display: inline-block; flex: none; width: 5px; height: 3px; background: #555; clip-path: polygon(0 0, 100% 0, 50% 100%); }
.ar.lg { width: 7px; height: 4px; }
.ar.dim { background: #aaa; }

/* header */
.head { display: flex; height: 42px; flex: none; }
.logo { display: flex; width: 46px; padding: 7px 0 0 8px; border-right: 1px solid #d4d4d4; }
.corner { align-self: flex-end; margin: 0 0 2px -1px; border: 2px solid #666; border-top-color: transparent; border-left-color: transparent; }
.headmain { flex: 1; border-bottom: 1px solid #d2d4d6; }
.titlerow { display: flex; height: 23px; align-items: center; }
.quick { display: flex; align-items: center; width: 693px; padding: 0 0 2px 8px; gap: 7px; }
.quick .ar { margin: 0 1px 0 -3px; }
.quick .sg { width: 15px; height: 16px; }
.more { margin: 4px 0 0 2px; }
.apptitle { font-size: 12.200px; white-space: nowrap; letter-spacing: .19px; padding-bottom: 1px; }
.winbtns { display: flex; gap: 26px; margin-left: auto; padding: 0 14px 1px 0; }
.tabs { display: flex; height: 18px; align-items: stretch; padding-left: 4px; color: #333; }
.tabs > span { padding: 1px 13px 0; line-height: 17px; }
.tabs > .on { background: #57a5f5; color: #fff; }
.helpbar { display: flex; align-items: center; margin-left: auto; padding-right: 7px; }
.search { display: flex; align-items: center; justify-content: space-between; width: 245px; height: 17px; padding: 0 6px 0 2px; border: 1px solid #c4c4c4; color: #bdbdbd; white-space: nowrap; margin-right: 9px; letter-spacing: -.28px; }
.h2 { margin-left: 8px; } .h3 { margin-left: 8px; } .h4 { margin-left: 8px; } .h5 { margin-left: 9px; }
.qm { margin-left: 7px; font-size: 15px; color: #999; } .helpbar .ar { margin-left: 2px; }

/* ribbon */
.ribbon { display: flex; flex: none; height: 98px; background: linear-gradient(#fff 35%, #e9ecee); border-bottom: 1px solid #878c92; }
.grp { display: flex; flex-direction: column; margin: 2px 0 3px; height: 92px; border-right: 1px solid #c9ccd0; }
.body { display: flex; height: 72px; }
.cols { display: grid; grid-auto-flow: column; grid-template-rows: repeat(3, 23px); padding-top: 1px; justify-content: start; }
.cols a { display: flex; align-items: center; gap: 3px; white-space: nowrap; }
.cols .ar { margin-left: 3px; }
.cap { display: flex; align-items: center; justify-content: center; height: 18px; gap: 6px; margin-top: 2px; }
.cap.low { padding-top: 2px; }
.big { display: flex; flex-direction: column; align-items: center; height: 67px; margin-top: 3px; padding-top: 2px; white-space: nowrap; }
.big span { margin-top: 5px; } .big .ar { margin-top: 7px; }
.sel { background: #c9d9f0; }
.off { color: #b4b6b8; }
.g1 { width: 146px; } .g1 .body { padding-left: 8px; gap: 5px; } .g1 .big { width: 40px; }
.g2x { width: 194px; } .g2x .body { padding-left: 9px; } .g2x .cols { grid-template-columns: 80px 90px; }
.g3 { width: 276px; } .g3 .body { padding-left: 9px; } .g3 .cols { grid-template-columns: 66px 111px 80px; }
.g4 { width: 237px; } .g4 .body { padding-left: 9px; } .g4 .cols { grid-template-columns: repeat(3, 54px) 60px; }
.g5 { width: 119px; } .g5 .big { width: 36px; } .g5 .big:first-child { width: 50px; } .g5 .cols { padding-left: 6px; }
.g6 { width: 250px; } .g6 .body { padding-left: 6px; gap: 5px; } .g6 .big { width: 44px; } .g6 .cols { grid-template-columns: 102px 90px; }
.g7 { width: 421px; } .g7 .body { padding-left: 6px; gap: 5px; } .g7 .big { width: 50px; } .g7 .cols { grid-template-columns: 87px 103px 89px 80px; }
.g7 .cap { padding-right: 0; }

/* combo row */
.combos { display: flex; flex: none; gap: 5px; height: 29px; padding: 3px; background: #cacdd2; border-bottom: 1px solid #8c9198; }
.combos div { display: flex; align-items: center; justify-content: space-between; width: 100px; height: 22px; padding: 1px 4px 0; border: 1px solid #abaeb3; background: #fff; }

/* main area */
.main { display: flex; flex: none; height: 841px; background: #fff; }
.nav { width: 208px; margin-right: 4px; border: solid #c3c6cb; border-width: 0 1px; }
.navhead { height: 21px; padding: 3px 0 0 8px; background: #efefef; border-bottom: 1px solid #c9ccd1; color: #666; }
.navtools { display: flex; align-items: center; height: 30px; padding: 0 0 0 6px; background: #efefef; border-bottom: 1px solid #c9ccd1; }
.vw { display: flex; align-items: center; justify-content: center; width: 25px; height: 24px; margin-right: 3px; }
.vw.on { margin-left: auto; margin-right: 4px; border: 1px solid #5aa5f5; border-radius: 3px; background: #eaf4ff; }
.tree { padding-top: 4px; }
.tree p { display: flex; align-items: center; height: 24px; padding-left: 5px; gap: 5px; }
.fd { width: 14px; height: 13px; margin-bottom: 2px; }
.si { width: 16px; height: 16px; margin-right: 6px; }
.tree .sub { padding-left: 44px; gap: 0; }
.hit { display: flex; align-items: center; width: 80px; height: 21px; margin-left: -4px; padding-left: 4px; background: #c9d9f0; }

.panel { display: flex; flex-direction: column; width: 286px; border: solid #c3c6cb; border-width: 0 1px; background: #efefef; }
.ptop { display: flex; justify-content: flex-end; height: 12px; padding: 3px 4px 0 0; background: #d1d4d9; border-bottom: 1px solid #c3c6cb; flex: none; }
.ptabs { display: flex; height: 22px; flex: none; border-bottom: 1px solid #c3c6cb; }
.ptabs span { width: 65px; text-align: center; line-height: 21px; background: #dcdcdc; color: #888; border-right: 1px solid #c3c6cb; }
.ptabs .on { height: 21px; background: #efefef; color: #111; }
.ptools { display: flex; flex: none; height: 30px; align-items: center; padding-left: 4px; border-bottom: 1px solid #c9ccd1; }
.ptools a { display: flex; align-items: center; gap: 3px; color: #333; }
.ptools .ar { margin-left: 5px; }
.t2 { margin-left: 11px; } .t3 { margin-left: 12px; } .t4 { margin-left: 16px; }
.tbl { display: flex; flex: 1; min-height: 0; overflow: hidden; background: #fff; }
.rows { width: 268px; }
.hd, .r { display: grid; grid-template-columns: 171px 36px 61px; }
.hd { height: 25px; margin-bottom: 1px; text-align: center; line-height: 25px; color: #333; background: #efefef; border-bottom: 1px solid #d8d8d8; }
.hd span { height: 25px; border-right: 1px solid #d4d6d9; }
.hd span:first-child { background: #80bbfa; color: #fff; font-weight: bold; }
.r, .gr { height: 21px; border-bottom: 1px solid #d6d6d6; border-right: 1px solid #d6d6d6; line-height: 20px; }
.gr { display: flex; gap: 6px; padding-left: 2px; letter-spacing: .22px; }
.gr i { width: 13px; height: 13px; margin-top: 3px; border: 1px solid #888; border-radius: 2px; font-style: normal; line-height: 11px; text-align: center; }
.r span { height: 20px; white-space: nowrap; }
.n { padding-left: 31px; border-right: 1px solid #d6d6d6; background: linear-gradient(#d8d8d8, #d8d8d8) 8px 0 / 1px 100% no-repeat, linear-gradient(#d8d8d8, #d8d8d8) 9px 9px / 16px 1px no-repeat; }
.end .n { background-size: 1px 10px, 16px 1px; }
.l { display: flex; align-items: center; justify-content: center; border-right: 1px solid #d6d6d6; }
.l svg { width: 12px; height: 14px; } .l .un { width: 16px; height: 15px; margin-right: 2px; }
.f { padding-left: 3px; }
.cur { background-color: #d5e9ff; }
.cur .n { outline: 1.500px solid #777; outline-offset: -1px; }
.scroll { display: flex; flex-direction: column; align-items: center; width: 8px; margin-left: 5px; padding: 3px 0 4px; }
.scroll .ar { background: #222; margin-top: auto; }
.scroll .up { margin-top: 0; transform: scaleY(-1); }
.thumb { width: 8px; height: 716px; margin-top: 3px; border-radius: 4px; background: #cbcbcb; }
.split { width: 4px; padding-top: 371px; }
.grip { height: 100px; background: #5f6b77; }

.view { position: relative; flex: 1; background: #000; }
.t { font-family: "Roboto", sans-serif; font-weight: 300; }
.t19 { font-size: 27px; } .t16 { font-size: 22.500px; } .t15 { font-size: 20.500px; } .t13 { font-size: 17.500px; } .t10 { font-size: 14px; }
.pk { fill: #e87878; } .tl { fill: #009696; } .yy { fill: #0f0; } .xx { fill: #f00; }
.green rect { fill: #2be02b; stroke: #14d8c0; } .pinkb rect { fill: #eb7474; stroke: #2cc8c8; }
.purple { fill: #8b00ff; }

.float { position: absolute; left: 6px; top: 6px; width: 149px; height: 180px; border: 1px solid #2a68a8; background: #1d4873; }
.fhead { display: flex; justify-content: flex-end; height: 12px; padding: 3px 4px 0 0; background: #193a5e; }
.fbody { display: flex; flex-direction: column; gap: 6px; padding: 6px; }
.fbody button { display: flex; align-items: center; justify-content: center; position: relative; width: 135px; height: 26px; padding: 2px 0 0; border: 1px solid #173d63; border-radius: 2px; background: #205283; color: #fff; font: inherit; white-space: nowrap; }
.fbody .wide { padding-right: 9px; }
.fbody .ar { position: absolute; right: 5px; top: 10px; width: 8px; height: 4px; background: #fff; }

.vtools { position: absolute; right: 3px; top: 3px; width: 33px; height: 227px; padding-top: 9px; display: flex; flex-direction: column; align-items: center; border: 1px solid #c4c6c8; background: #97999c; }
.cube { fill: #8394ad; stroke: #333d4b; }
.d3 { font: 8.500px "DejaVu Sans", sans-serif; fill: #222; }
.c1, .c2 { margin-top: 5px; } .c3, .c4 { margin-top: 6px; }
.vtools .ar { margin-top: 6px; width: 6px; height: 3px; background: #333; }
.vtools hr { width: 24px; margin: 5px 0 4px; border: 0; border-top: 1px solid #666; }

/* status bar */
.status { display: flex; align-items: center; flex: none; height: 30px; background: #dedee0; border-bottom: 1px solid #fff; color: #333; white-space: nowrap; padding: 2px 0 0 2px; }
.s1 { width: 263px; } .s2 { width: 40px; } .s3 { width: 43px; } .s4 { width: 40px; } .s5 { width: 93px; } .s6 { width: 103px; } .s7 { width: 103px; }
.sb { display: flex; align-items: center; justify-content: center; width: 25px; height: 25px; margin-right: 3px; border: 1px solid #97999c; background: #d0d0d2; }
.wd { width: 36px; gap: 6px; } .act { background: #fff; border-color: #3a93e8; margin-right: 6px; } .dis { border-color: #b5b7ba; }
.sb.tx1 { width: 73px; } .sb.tx2 { width: 61px; }
.tip { margin-left: 3px; } .fps { margin-left: auto; padding-right: 13px; }

/* taskbar */
.task { display: flex; flex: none; height: 40px; background: #0f100b; color: #fff; }
.start { width: 48px; padding: 12px 0 0 16px; }
.sbox { display: flex; align-items: center; width: 344px; padding: 1px 0 0 10px; gap: 10px; background: #f2f2f2; color: #444; font-size: 14px; }
.mic { margin: 0 15px 0 auto; }
.tb { display: flex; align-items: center; justify-content: center; width: 49px; }
.tv { width: 48px; }
.run { background: linear-gradient(#76b9ed, #76b9ed) 50% 38px / 40px 2px no-repeat; }
.run.g0 { width: 52px; }
.run.cur { width: 48px; background: linear-gradient(#76b9ed, #76b9ed) 0 38px / 100% 2px no-repeat #3b3c39; }
.tray { display: flex; align-items: center; margin: 0 3px 0 auto; padding-right: 20px; border-right: 1px solid #66665f; }
.p2 { margin-left: 22px; } .p3 { margin-left: 10px; } .p4 { margin-left: 7px; } .ime { margin-left: 8px; font-size: 13px; } .p5 { margin-left: 14px; }
.clock { display: flex; flex-direction: column; align-items: center; width: 76px; margin-left: 7px; line-height: 19px; font-size: 12px; } .p6 { margin-left: 11px; }
```
